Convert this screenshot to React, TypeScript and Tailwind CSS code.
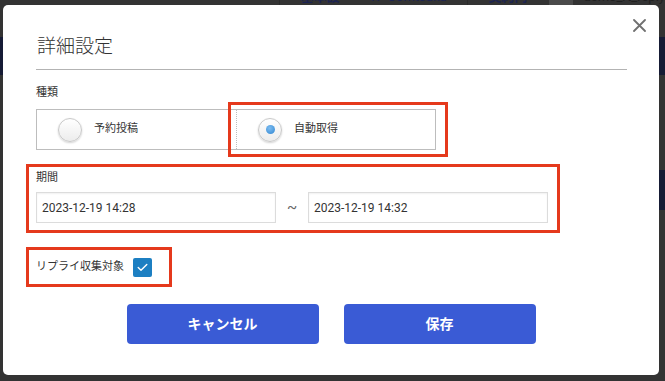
import React from "react"

const font = "font-['Roboto','Noto_Sans_CJK_JP',sans-serif]"

function Radio({ label, checked }: { label: string; checked?: boolean }) {
  return (
    <div className="flex items-center pl-[21px]">
      <span className="flex h-[24px] w-[24px] items-center justify-center rounded-full border border-[#c9c9c9] bg-gradient-to-b from-white to-[#ececec] shadow-[0_1px_2px_rgba(0,0,0,0.18)]">
        {checked && (
          <span className="h-[9px] w-[9px] rounded-full bg-[radial-gradient(circle_at_40%_35%,#7dbcf0,#2f86d2)]" />
        )}
      </span>
      <span className="ml-[12px] text-[11px] text-[#333]">{label}</span>
    </div>
  )
}

function DateInput({ value }: { value: string }) {
  return (
    <div className="flex h-[31px] w-[240px] items-center border border-[#dcdcdc] pl-[5px] text-[12px] text-[#333] shadow-[inset_0_1px_2px_rgba(0,0,0,0.06)]">
      {value}
    </div>
  )
}

export default function App() {
  return (
    <div className={`relative h-[381px] w-[665px] overflow-hidden bg-[#333333] ${font}`}>
      {/* page behind the overlay */}
      <div className="-mt-[12px] flex h-[49px] items-start text-[13px] font-bold text-[#1c2350]">
        <span className="ml-[279px] h-[22px] w-px bg-[#2a2a2a]" />
        <span className="ml-[21px] leading-[18px]">基本設定</span>
        <span className="ml-[30px] font-normal leading-[18px]">X</span>
        <span className="ml-[8px] font-normal leading-[18px]">Comtsuku</span>
        <span className="ml-[20px] h-[22px] w-px bg-[#2a2a2a]" />
        <span className="ml-[21px] leading-[18px]">契約内容</span>
        <span className="ml-[20px] h-[18px] w-[31px] bg-[#4a4a4a]" />
        <span className="ml-[10px] font-normal leading-[18px] text-[#202020]">demo_rt_reply</span>
      </div>
      <div className="h-[38px] bg-[#161b35]" />
      <div className="h-[95px]" />
      <div className="ml-auto h-[40px] w-[10px] bg-[#161b35]" />

      {/* dialog */}
      <div className="absolute left-[3px] top-[5px] h-[370px] w-[656px] rounded-[5px] bg-white pb-[31px] pl-[33px] pr-[32px] pt-[30px] text-[#333]">
        <button className="absolute right-[13px] top-[14px] flex h-[13px] w-[13px] items-center justify-center">
          <svg width="13" height="13" viewBox="0 0 13 13">
            <path d="M1 1L12 12M12 1L1 12" stroke="#707070" strokeWidth="1.8" strokeLinecap="round" />
          </svg>
        </button>

        <h2 className="pl-[1px] text-[19px] leading-[24px] font-light text-[#333]">詳細設定</h2>
        <div className="mt-[10px] h-px bg-[#b3b3b3]" />

        <div className="mt-[15px] text-[11px] leading-[16px]">種類</div>
        <div className="mt-[8px] grid h-[41px] w-[400px] grid-cols-[199px_201px] border border-[#bdbdbd]">
          <Radio label="予約投稿" />
          <div className="flex items-center border-l border-dotted border-[#bdbdbd]">
            <Radio label="自動取得" checked />
          </div>
        </div>

        <div className="mt-[20px] text-[11px] leading-[16px]">期間</div>
        <div className="mt-[6px] flex items-center">
          <DateInput value="2023-12-19 14:28" />
          <span className="w-[32px] text-center text-[15px] leading-none text-[#666]">~</span>
          <DateInput value="2023-12-19 14:32" />
        </div>

        <div className="mt-[35px] flex h-[19px] items-center">
          <span className="text-[11px]">リプライ収集対象</span>
          <span className="ml-[9px] flex h-[19px] w-[19px] items-center justify-center rounded-[2px] bg-[#1c7fc2]">
            <svg width="11" height="9" viewBox="0 0 11 9">
              <path d="M1.2 4.6L4 7.3L9.8 1.4" fill="none" stroke="white" strokeWidth="1.4" strokeLinecap="round" strokeLinejoin="round" />
            </svg>
          </span>
        </div>

        <div className="mt-[27px] -ml-[33px] -mr-[32px] flex justify-center gap-[25px]">
          <button className="h-[40px] w-[192px] rounded-[4px] bg-[#3a5bd5] text-[14px] font-bold text-white">キャンセル</button>
          <button className="h-[40px] w-[192px] rounded-[4px] bg-[#3a5bd5] text-[14px] font-bold text-white">保存</button>
        </div>

        {/* red annotation boxes */}
        <div className="pointer-events-none absolute left-[225px] top-[97px] h-[55px] w-[220px] border-[3px] border-[#e5391c]" />
        <div className="pointer-events-none absolute left-[23px] top-[159px] h-[69px] w-[534px] border-[3px] border-[#e5391c]" />
        <div className="pointer-events-none absolute left-[23px] top-[242px] h-[40px] w-[146px] border-[3px] border-[#e5391c]" />
      </div>
    </div>
  )
}
